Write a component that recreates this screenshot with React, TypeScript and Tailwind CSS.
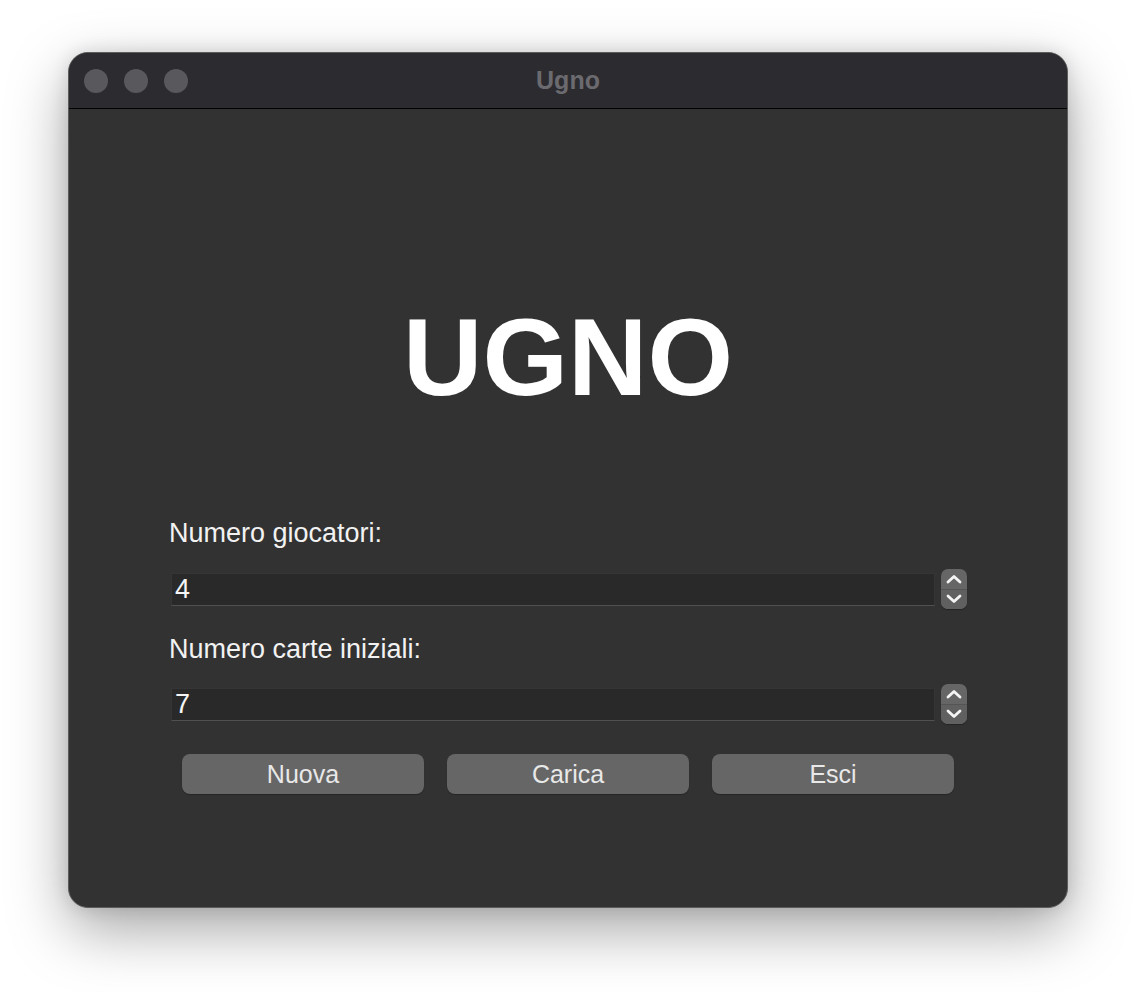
import { ReactNode } from 'react';

const FONT = { fontFamily: '"Liberation Sans", Arial, sans-serif' };

function Chevron({ up }: { up?: boolean }) {
  return (
    <svg width="16" height="10" viewBox="0 0 16 10" fill="none">
      <path
        d={up ? 'M2 8 L8 2.5 L14 8' : 'M2 2 L8 7.5 L14 2'}
        stroke="#f4f4f4"
        strokeWidth="2.8"
        strokeLinecap="round"
        strokeLinejoin="round"
      />
    </svg>
  );
}

function Stepper({ value }: { value: string }) {
  return (
    <div className="flex items-center gap-[6px] ml-[2px]">
      <div className="w-[764px] h-[33px] bg-[#292929] border border-[#353535] border-b-[#505050] flex items-center pl-[3px] text-[27px] leading-none text-[#f5f5f5]">
        {value}
      </div>
      <div className="w-[26px] h-[40px] rounded-[7px] bg-[#666666] flex flex-col overflow-hidden shadow-[0_1px_1px_rgba(0,0,0,0.3)]">
        <div className="flex-1 flex items-center justify-center border-b border-[#555555]">
          <Chevron up />
        </div>
        <div className="flex-1 flex items-center justify-center bg-[#606060]">
          <Chevron />
        </div>
      </div>
    </div>
  );
}

function Label({ children }: { children: ReactNode }) {
  return <div className="text-[27px] leading-[32px] text-[#f2f2f2]">{children}</div>;
}

function Btn({ children }: { children: ReactNode }) {
  return (
    <button className="w-[242px] h-[40px] rounded-[8px] bg-[#666666] text-[25px] leading-none text-[#e8e8e8] flex items-center justify-center shadow-[0_1px_1px_rgba(0,0,0,0.25)]">
      {children}
    </button>
  );
}

export default function App() {
  return (
    <div className="w-[1136px] h-[992px] bg-white pt-[52px] pl-[68px]" style={FONT}>
      <div className="w-[1000px] h-[856px] rounded-[20px] border border-[#5c5c5c] bg-[#323232] overflow-hidden flex flex-col shadow-[0_22px_60px_rgba(0,0,0,0.35),0_0_18px_rgba(0,0,0,0.12)]">
        {/* title bar */}
        <div className="h-[56px] shrink-0 bg-[#2c2b30] border-b border-black grid grid-cols-[1fr_auto_1fr] items-center px-[15px]">
          <div className="flex gap-[16px]">
            <span className="w-[24px] h-[24px] rounded-full bg-[#59585d]" />
            <span className="w-[24px] h-[24px] rounded-full bg-[#59585d]" />
            <span className="w-[24px] h-[24px] rounded-full bg-[#59585d]" />
          </div>
          <div className="text-[25px] font-bold text-[#6b6a6f] leading-none">Ugno</div>
          <div />
        </div>

        {/* content */}
        <div className="flex flex-col">
          <div className="mt-[193px] text-center text-[110px] leading-[110px] font-bold text-white">UGNO</div>

          <div className="mt-[105px] pl-[100px] pr-[100px] flex flex-col">
            <Label>Numero giocatori:</Label>
            <div className="mt-[20px]">
              <Stepper value="4" />
            </div>
            <div className="mt-[24px]">
              <Label>Numero carte iniziali:</Label>
            </div>
            <div className="mt-[19px]">
              <Stepper value="7" />
            </div>
          </div>

          <div className="mt-[30px] px-[113px] flex justify-between">
            <Btn>Nuova</Btn>
            <Btn>Carica</Btn>
            <Btn>Esci</Btn>
          </div>
        </div>
      </div>
    </div>
  );
}
